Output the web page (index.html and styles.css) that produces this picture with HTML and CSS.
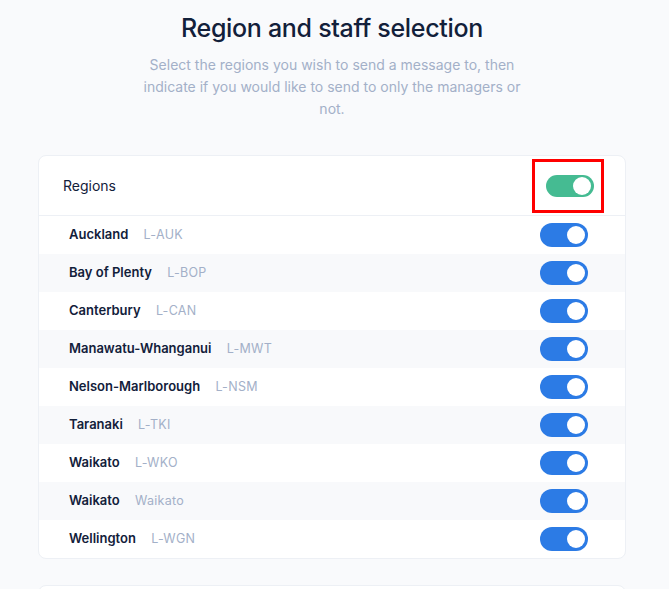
FILE: index.html
```html
<!DOCTYPE html>
<html lang="en">
<head>
    <meta charset="UTF-8">
    <meta name="viewport" content="width=device-width, initial-scale=1.0">
    <title>Region and staff selection</title>
    <link rel="stylesheet" href="styles.css">
</head>
<body>
    <div class="page">
        <div class="intro">
            <h1>Region and staff selection</h1>
            <p>Select the regions you wish to send a message to, then indicate if you would like to send to only the managers or not.</p>
        </div>

        <div class="card">
            <div class="card-header">
                <span>Regions</span>
                <div class="highlight">
                    <label class="switch switch-green">
                        <input type="checkbox" checked>
                        <span class="slider"></span>
                    </label>
                </div>
            </div>

            <ul class="region-list">
                <li class="region-row">
                    <div class="region-name">Auckland <span class="region-code">L-AUK</span></div>
                    <label class="switch"><input type="checkbox" checked><span class="slider"></span></label>
                </li>
                <li class="region-row">
                    <div class="region-name">Bay of Plenty <span class="region-code">L-BOP</span></div>
                    <label class="switch"><input type="checkbox" checked><span class="slider"></span></label>
                </li>
                <li class="region-row">
                    <div class="region-name">Canterbury <span class="region-code">L-CAN</span></div>
                    <label class="switch"><input type="checkbox" checked><span class="slider"></span></label>
                </li>
                <li class="region-row">
                    <div class="region-name">Manawatu-Whanganui <span class="region-code">L-MWT</span></div>
                    <label class="switch"><input type="checkbox" checked><span class="slider"></span></label>
                </li>
                <li class="region-row">
                    <div class="region-name">Nelson-Marlborough <span class="region-code">L-NSM</span></div>
                    <label class="switch"><input type="checkbox" checked><span class="slider"></span></label>
                </li>
                <li class="region-row">
                    <div class="region-name">Taranaki <span class="region-code">L-TKI</span></div>
                    <label class="switch"><input type="checkbox" checked><span class="slider"></span></label>
                </li>
                <li class="region-row">
                    <div class="region-name">Waikato <span class="region-code">L-WKO</span></div>
                    <label class="switch"><input type="checkbox" checked><span class="slider"></span></label>
                </li>
                <li class="region-row">
                    <div class="region-name">Waikato <span class="region-code">Waikato</span></div>
                    <label class="switch"><input type="checkbox" checked><span class="slider"></span></label>
                </li>
                <li class="region-row">
                    <div class="region-name">Wellington <span class="region-code">L-WGN</span></div>
                    <label class="switch"><input type="checkbox" checked><span class="slider"></span></label>
                </li>
            </ul>
        </div>

        <div class="card card-next"></div>
    </div>
</body>
</html>
```

FILE: styles.css
```css
:root {
    --bg: #f9fafc;
    --border: #edf0f5;
    --text-dark: #12203a;
    --text-muted: #a3b0c8;
    --row-alt: #f8f9fb;
    --blue: #2c7be5;
    --green: #45bb92;
    --white: #ffffff;
}

* {
    margin: 0;
    padding: 0;
    box-sizing: border-box;
    font-family: Inter, "Noto Sans", sans-serif;
}

body {
    background-color: var(--bg);
    color: var(--text-dark);
}

.page {
    padding: 11px 43px 0 38px;
}

.intro {
    text-align: center;
    margin-bottom: 35px;
}

.intro h1 {
    font-size: 25px;
    font-weight: 500;
    line-height: 34px;
    letter-spacing: -0.3px;
    margin-bottom: 9px;
}

.intro p {
    max-width: 395px;
    margin: 0 auto;
    font-size: 14px;
    line-height: 22px;
    color: var(--text-muted);
}

.card {
    background-color: var(--white);
    border: 1px solid var(--border);
    border-radius: 8px;
    overflow: hidden;
}

.card-header {
    display: flex;
    justify-content: space-between;
    align-items: center;
    height: 60px;
    padding: 0 21px 0 24px;
    border-bottom: 1px solid var(--border);
    font-size: 14px;
}

.highlight {
    display: flex;
    align-items: center;
    justify-content: center;
    width: 72px;
    height: 54px;
    padding-left: 4px;
    border: 3px solid #ff0000;
}

.region-list {
    list-style: none;
}

.region-row {
    display: flex;
    justify-content: space-between;
    align-items: center;
    height: 38px;
    padding: 0 37px 0 30px;
}

.region-row:nth-child(even) {
    background-color: var(--row-alt);
}

.region-name {
    font-size: 13px;
    font-weight: 600;
    margin-bottom: 2px;
}

.region-code {
    margin-left: 12px;
    font-size: 12.5px;
    font-weight: 400;
    letter-spacing: 0.3px;
    color: var(--text-muted);
}

.switch {
    position: relative;
    display: inline-block;
    width: 48px;
    height: 24px;
}

.switch input {
    display: none;
}

.slider {
    position: absolute;
    inset: 0;
    border-radius: 12px;
    background-color: #d5dbe5;
    cursor: pointer;
}

.slider::before {
    content: "";
    position: absolute;
    top: 3px;
    left: 3px;
    width: 18px;
    height: 18px;
    border-radius: 50%;
    background-color: var(--white);
    transition: transform 0.2s;
}

.switch input:checked + .slider {
    background-color: var(--blue);
}

.switch input:checked + .slider::before {
    transform: translateX(24px);
}

.switch-green {
    height: 22px;
}

.switch-green .slider::before {
    top: 2px;
}

.switch-green input:checked + .slider {
    background-color: var(--green);
}

.card-next {
    margin-top: 26px;
    height: 40px;
}
```
